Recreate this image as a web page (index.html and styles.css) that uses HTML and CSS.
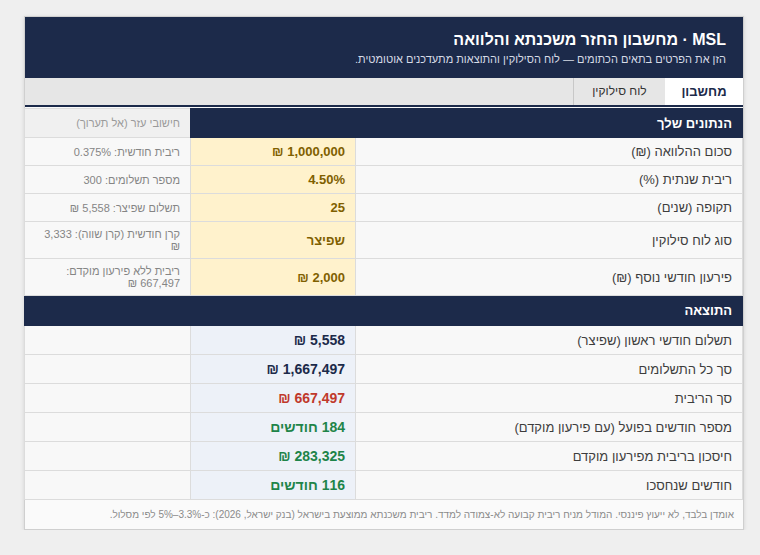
FILE: index.html
```html
<!DOCTYPE html>
<html lang="he" dir="rtl">
<head>
<meta charset="utf-8">
<link rel="stylesheet" href="styles.css">
</head>
<body>
<div class="card">
  <header class="head">
    <h1 class="title">MSL · מחשבון החזר משכנתא והלוואה</h1>
    <p class="sub">הזן את הפרטים בתאים הכתומים — לוח הסילוקין והתוצאות מתעדכנים אוטומטית.</p>
  </header>
  <nav class="tabs">
    <div class="tab active">מחשבון</div>
    <div class="tab">לוח סילוקין</div>
  </nav>
  <table class="sheet">
    <colgroup><col class="c-label"><col class="c-val"><col class="c-aux"></colgroup>
    <tr class="sec">
      <th colspan="2" class="sec-title">הנתונים שלך</th>
      <th class="aux-head">חישובי עזר (אל תערוך)</th>
    </tr>
    <tr><td class="lbl">סכום ההלוואה (₪)</td><td class="inp">1,000,000 ₪</td><td class="aux">ריבית חודשית: 0.375%</td></tr>
    <tr><td class="lbl">ריבית שנתית (%)</td><td class="inp">4.50%</td><td class="aux">מספר תשלומים: 300</td></tr>
    <tr><td class="lbl">תקופה (שנים)</td><td class="inp">25</td><td class="aux">תשלום שפיצר: 5,558 ₪</td></tr>
    <tr class="tall"><td class="lbl">סוג לוח סילוקין</td><td class="inp">שפיצר</td><td class="aux">קרן חודשית (קרן שווה): 3,333 ₪</td></tr>
    <tr class="tall"><td class="lbl">פירעון חודשי נוסף (₪)</td><td class="inp">2,000 ₪</td><td class="aux">ריבית ללא פירעון מוקדם: 667,497 ₪</td></tr>
    <tr class="sec sec2"><th colspan="3" class="sec-title">התוצאה</th></tr>
    <tr class="res"><td class="lbl">תשלום חודשי ראשון (שפיצר)</td><td class="out navy">5,558 ₪</td><td class="aux"></td></tr>
    <tr class="res"><td class="lbl">סך כל התשלומים</td><td class="out navy">1,667,497 ₪</td><td class="aux"></td></tr>
    <tr class="res"><td class="lbl">סך הריבית</td><td class="out red">667,497 ₪</td><td class="aux"></td></tr>
    <tr class="res"><td class="lbl">מספר חודשים בפועל (עם פירעון מוקדם)</td><td class="out green">184 חודשים</td><td class="aux"></td></tr>
    <tr class="res"><td class="lbl">חיסכון בריבית מפירעון מוקדם</td><td class="out green">283,325 ₪</td><td class="aux"></td></tr>
    <tr class="res"><td class="lbl">חודשים שנחסכו</td><td class="out green">116 חודשים</td><td class="aux"></td></tr>
  </table>
  <footer class="foot">אומדן בלבד, לא ייעוץ פיננסי. המודל מניח ריבית קבועה לא-צמודה למדד. ריבית משכנתא ממוצעת בישראל (בנק ישראל, 2026): כ-3.3%–5% לפי מסלול.</footer>
</div>
</body>
</html>
```
FILE: styles.css
```css
* { box-sizing: border-box; }
html, body { margin: 0; }
body {
  background: #efefef;
  font-family: "Liberation Sans", Arial, sans-serif;
  padding: 16px 16px 0 24px;
  direction: rtl;
}
.card {
  width: 720px;
  background: #fafafa;
  border: 1px solid #cfcfcf;
  box-shadow: 0 1px 4px rgba(0,0,0,0.12);
}
.head {
  background: #1c2a4a;
  color: #fff;
  padding: 12px 17px 11px 17px;
  height: 61px;
}
.title {
  margin: 0;
  font-size: 16px;
  font-weight: bold;
  line-height: 21px;
}
.sub {
  margin: 2px 0 0 0;
  font-size: 11px;
  line-height: 14px;
  color: #d6dbe6;
}
.tabs {
  display: flex;
  background: #e6e6e6;
  border-bottom: 2px solid #1c2a4a;
  height: 29px;
}
.tab {
  font-size: 12px;
  color: #333;
  padding: 0 18px;
  line-height: 27px;
  border-left: 1px solid #c8c8c8;
  width: 92px;
  text-align: center;
}
.tab.active {
  background: #fff;
  color: #1c2a4a;
  font-weight: bold;
  font-size: 13px;
  width: 78px;
  border-left: none;
  padding: 0;
}
.sheet {
  width: 718px;
  border-collapse: collapse;
  table-layout: fixed;
  margin-top: 1px;
}
.c-label { width: 387px; }
.c-val { width: 165px; }
.c-aux { width: 166px; }
.sheet td, .sheet th {
  border: 1px solid #dcdcdc;
  text-align: right;
  padding: 0 10px;
  height: 28px;
}
.sec th { height: 29px; }
.sec-title {
  background: #1c2a4a;
  color: #fff;
  font-size: 13px;
  font-weight: bold;
  border-color: #1c2a4a !important;
}
.sec2 th { height: 30px; }
.aux-head {
  background: #f0f0f0;
  color: #9a9a9a;
  font-size: 11px;
  font-weight: normal;
}
.lbl {
  background: #f8f8f8;
  color: #3d3d3d;
  font-size: 13px;
}
.inp {
  background: #fff2cc;
  color: #7f6000;
  font-weight: bold;
  font-size: 13px;
}
.aux {
  background: #f8f8f8;
  color: #858585;
  font-size: 11px;
  line-height: 12px;
}
.tall td { height: 37px; }
.res td { height: 29px; }
.out {
  background: #edf1f8;
  font-weight: bold;
  font-size: 14px;
}
.navy { color: #1c2a4a; }
.red { color: #c0392b; }
.green { color: #1e8449; }
.foot {
  font-size: 10px;
  color: #8a8a8a;
  padding: 9px 9px 9px;
  line-height: 11px;
  background: #fafafa;
}
```
